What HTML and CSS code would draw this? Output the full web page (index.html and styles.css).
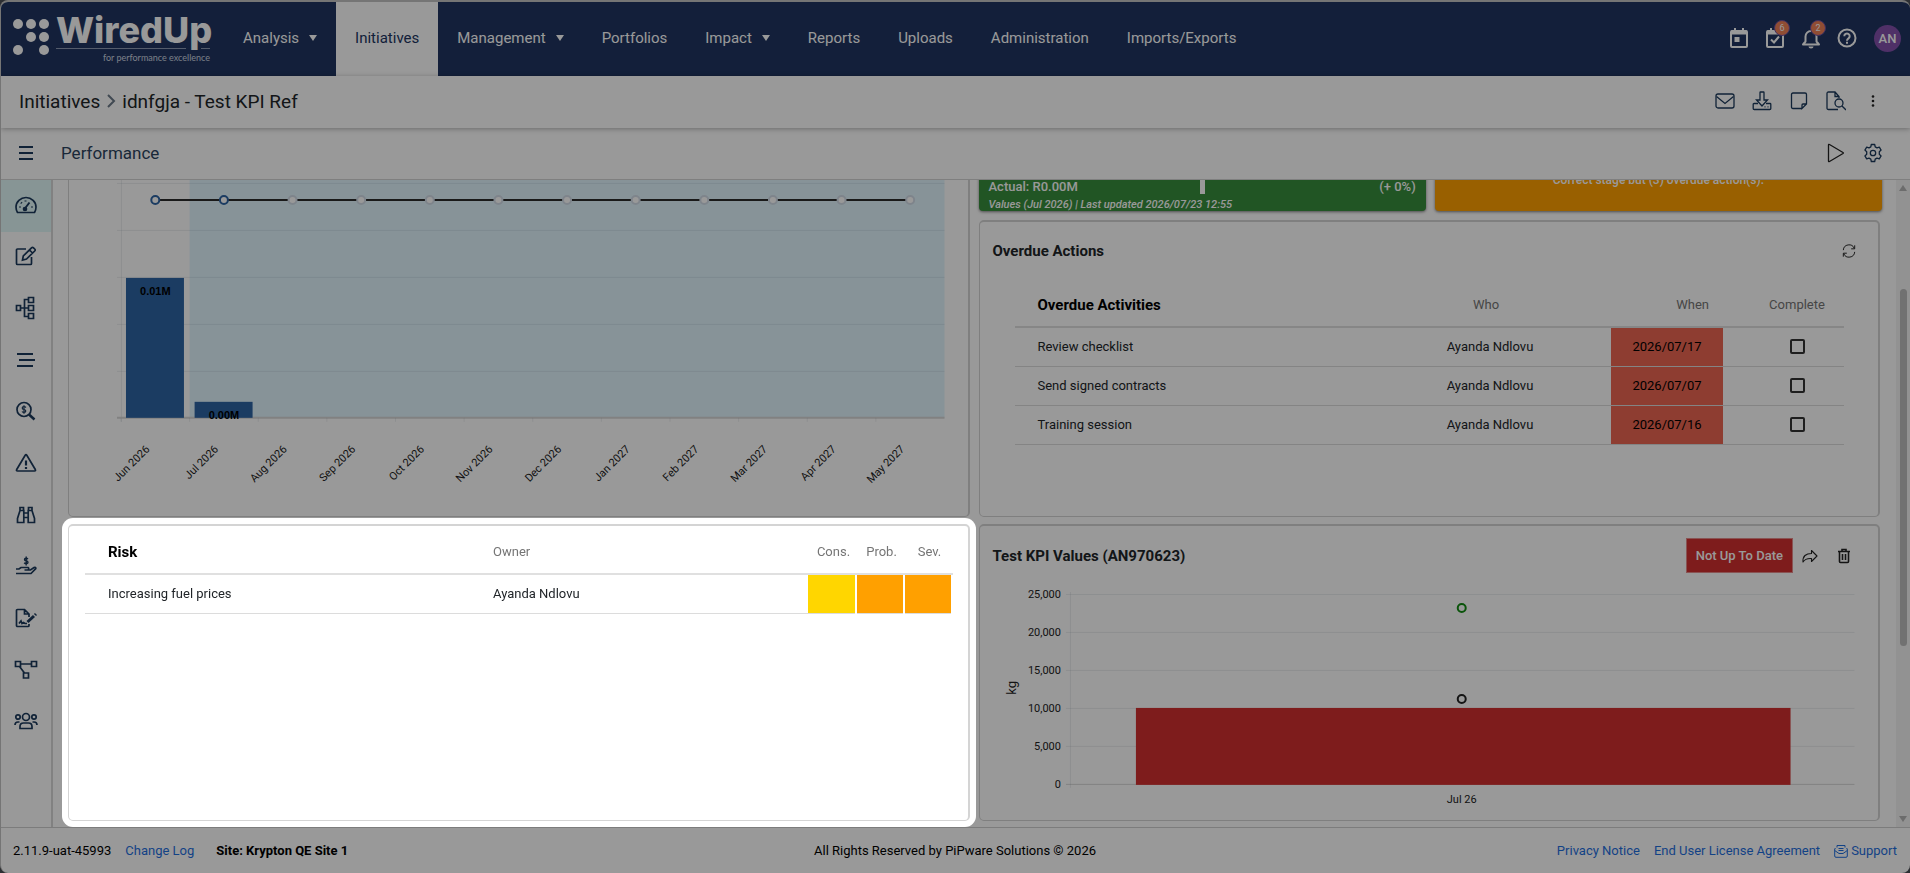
FILE: index.html
```
<!DOCTYPE html>
<html lang="en">
<head>
    <meta charset="UTF-8">
    <meta name="viewport" content="width=device-width, initial-scale=1.0">
    <title>WiredUp - Performance</title>
    <link rel="stylesheet" href="styles.css">
</head>
<body>

<div class="app">
    <header class="topbar">
        <a href="#" class="logo" aria-label="WiredUp">
            <svg width="212" height="74" viewBox="0 0 212 74">
                <g fill="#fff">
                    <circle cx="17" cy="22" r="5"/><circle cx="30" cy="22" r="5"/><circle cx="43" cy="22" r="5"/>
                    <circle cx="30" cy="35" r="5"/><circle cx="43" cy="35" r="5"/>
                    <circle cx="17" cy="48" r="5"/><circle cx="43" cy="48" r="5"/>
                </g>
                <path d="M55 46.500h130M200 46.500h9" stroke="#8c9ab5"/>
                <text x="55" y="41" class="logo-name">WiredUp</text>
                <text x="209" y="59" class="logo-tag">for performance excellence</text>
            </svg>
        </a>
        <nav class="menu">
            <a href="#">Analysis <span class="caret"></span></a>
            <a href="#" class="active">Initiatives</a>
            <a href="#">Management <span class="caret"></span></a>
            <a href="#">Portfolios</a>
            <a href="#">Impact <span class="caret"></span></a>
            <a href="#">Reports</a>
            <a href="#">Uploads</a>
            <a href="#">Administration</a>
            <a href="#">Imports/Exports</a>
        </nav>
        <div class="tools">
            <button aria-label="Calendar">
                <svg width="20" height="22" viewBox="0 0 20 22" fill="none" stroke="#fff" stroke-width="2"><rect x="2" y="4" width="16" height="16" rx="1"/><path d="M2 5.500h16" stroke-width="4"/><path d="M6 1v4M14 1v4"/><path d="M5.500 10h5v5h-5z" fill="#fff" stroke="none"/></svg>
            </button>
            <button aria-label="Tasks">
                <svg width="20" height="22" viewBox="0 0 20 22" fill="none" stroke="#fff" stroke-width="2"><rect x="2" y="4" width="16" height="16" rx="1"/><path d="M2 5.500h16" stroke-width="4"/><path d="M6 1v4M14 1v4M6 12.500l3 3 5-6"/></svg>
                <span class="badge">6</span>
            </button>
            <button aria-label="Notifications">
                <svg width="20" height="22" viewBox="0 0 20 22" fill="none" stroke="#fff" stroke-width="2"><path d="M2 17.500h16l-2.500-3V9.500a5.500 5.500 0 0 0-11 0v5L2 17.500z" stroke-linejoin="round"/><path d="M7.500 19.500h5a2.500 2 0 0 1-5 0z" fill="#fff" stroke="none"/></svg>
                <span class="badge">2</span>
            </button>
            <button aria-label="Help">
                <svg width="20" height="22" viewBox="0 0 20 22" fill="none" stroke="#fff" stroke-width="2"><circle cx="10" cy="11" r="8.500"/><path d="M7.300 9.200a2.700 2.700 0 1 1 4.200 2.200c-1 .7-1.500 1.100-1.500 2.300M10 14.800v2"/></svg>
            </button>
            <button class="avatar">AN</button>
        </div>
    </header>

    <div class="crumbs">
        <h1><a href="#">Initiatives</a>
            <svg width="10" height="16" viewBox="0 0 10 16" fill="none" stroke="#6c7a89" stroke-width="2"><path d="M2 2l6 6-6 6"/></svg>
            <span>idnfgja - Test KPI Ref</span></h1>
        <div class="actions">
            <button aria-label="Mail">
                <svg width="20" height="20" viewBox="0 0 20 20"><rect x="1" y="3" width="18" height="14" rx="2"/><path d="M1.500 5.500L10 12.500l8.500-7"/></svg>
            </button>
            <button aria-label="Download">
                <svg width="20" height="20" viewBox="0 0 20 20"><path d="M8 1.500q0-.5.500-.5h3q.5 0 .5.500V9h3.500L10 15 4.500 9H8z"/><path d="M6 12.500H2q-.8 0-.8.800v4.200q0 1 1 1h15.600q1 0 1-1v-4.200q0-.8-.8-.8h-4M12.500 15.800h1M15.500 15.800h1"/></svg>
            </button>
            <button aria-label="Notes">
                <svg width="20" height="20" viewBox="0 0 20 20"><path d="M13 17.500H4q-1.500 0-1.500-1.500V3.500Q2.500 2 4 2h12q1.500 0 1.500 1.500V13L13 17.500V14q0-1 1-1h3.500"/></svg>
            </button>
            <button aria-label="Preview">
                <svg width="20" height="20" viewBox="0 0 20 20"><path d="M12 18.500H2.500q-1.500 0-1.500-1.500V2.500Q1 1 2.500 1H9l4 4.500V7M9 1v4.500h4"/><circle cx="13" cy="12" r="4"/><path d="M16 15l4 4"/></svg>
            </button>
            <button aria-label="More">
                <svg width="20" height="20" viewBox="0 0 20 20"><g fill="#222" stroke="none"><circle cx="10" cy="5.500" r="1.300"/><circle cx="10" cy="10" r="1.300"/><circle cx="10" cy="14.500" r="1.300"/></g></svg>
            </button>
        </div>
    </div>

    <div class="pagebar">
        <button class="toggle" aria-label="Menu">
            <svg width="14" height="14" viewBox="0 0 14 14"><path d="M0 1h14M0 7h14M0 13h14" stroke-width="2"/></svg>
        </button>
        <h2>Performance</h2>
        <div class="actions">
            <button aria-label="Present">
                <svg width="20" height="20" viewBox="0 0 20 20"><path d="M2.500 2v16q0 1 1 .5l13.500-8q.7-.5 0-1l-13.500-8q-1-.5-1 .5z" stroke="#222"/></svg>
            </button>
            <button aria-label="Settings">
                <svg width="20" height="20" viewBox="0 0 20 20"><circle cx="10" cy="10" r="2.700"/><path d="M8.300 1.500h3.400l.5 2.400 1.800 1 2.300-.8 1.800 3-1.800 1.600v2.600l1.800 1.600-1.800 3-2.300-.8-1.800 1-.5 2.400H8.300l-.5-2.400-1.800-1-2.300.8-1.800-3 1.800-1.600V8.700L1.900 7.100l1.800-3 2.300.8 1.800-1z" stroke-linejoin="round"/></svg>
            </button>
        </div>
    </div>

    <div class="body">
        <aside class="sidebar">
            <nav>
                <a href="#" class="active" aria-label="Performance"><svg width="22" height="20" viewBox="0 0 22 20"><path d="M2.500 17.500Q1 15 1 12a10 9.500 0 0 1 20 0q0 3-1.500 5.500z"/><path d="M9.500 14l5-6.500M4.500 12h1M16.500 12h1M6 7.500l.8.800M10.500 5.500v1" stroke-width="2"/><circle cx="10" cy="14" r="1.500" fill="#1c3a5c"/></svg></a>
                <a href="#" aria-label="Edit"><svg width="22" height="20" viewBox="0 0 22 20"><path d="M11 3H2.500Q1.500 3 1.500 4v13.500q0 1 1 1h13q1 0 1-1V11"/><path d="M7.500 14l.8-4L16.500 1.800q1-1 2 0l1.200 1.200q1 1 0 2L11.500 13zM14.500 4l3 3"/></svg></a>
                <a href="#" aria-label="Hierarchy"><svg width="22" height="24" viewBox="0 0 22 24"><path d="M1.500 9.500h4v5h-4zM13.500 1.500h5v5h-5zM13.500 9.500h5v5h-5zM13.500 17.500h5v5h-5zM5.500 12h8M13.500 3.500h-4v17h4"/></svg></a>
                <a href="#" aria-label="Timeline"><svg width="22" height="20" viewBox="0 0 22 20"><path d="M2 4h16M4 10h16M2 16h16" stroke-width="2.200"/></svg></a>
                <a href="#" aria-label="Financials"><svg width="22" height="20" viewBox="0 0 22 20"><circle cx="9" cy="8.500" r="7"/><path d="M14 13.500l5.500 5" stroke-width="2.500"/><path d="M11 6.500q-1-1-2-1-1.800 0-1.800 1.400T9 8.500t1.800 1.500T9 11.500q-1.200 0-2-1M9 4.300v8.400" stroke-width="1.200"/></svg></a>
                <a href="#" aria-label="Risks"><svg width="22" height="20" viewBox="0 0 22 20"><path d="M10.200 2.200q.8-1.300 1.600 0l8.500 14.300q.7 1.500-.8 1.500h-17q-1.500 0-.8-1.500z"/><path d="M11 7.500v5M11 14v2" stroke-width="2.200"/></svg></a>
                <a href="#" aria-label="Benefits"><svg width="22" height="20" viewBox="0 0 22 20"><path d="M2.500 17.500v-4L5 5.500h3.800v12zM19.500 17.500v-4L17 5.500h-3.800v12zM8.800 8h4.400M8.800 12.500h4.400M5 5V2.500h3.500V5M13.500 5V2.500H17V5"/></svg></a>
                <a href="#" aria-label="Funding"><svg width="22" height="20" viewBox="0 0 22 20"><path d="M1 13h3l2-1.500h7q1.500.8 0 2.500H9.500M13 14h2.500l3.500-2.500q2-.5 1.800 1L16 17.500H1"/><path d="M13 3q-.8-.8-1.800-.8-1.700 0-1.700 1.300t1.700 1.400T13 6.200t-1.800 1.500q-1.200 0-2-1M11.200.5v9" stroke-width="1.400"/></svg></a>
                <a href="#" aria-label="Contracts"><svg width="22" height="20" viewBox="0 0 22 20"><path d="M14 16v1.500q0 1-1 1H2.500q-1 0-1-1v-15q0-1 1-1H9.500L14 6v3M9.500 1.500V6H14M4 15.500l2-2.500 1 2.500 1.500-1 1.500 1h2"/><path d="M12.500 14l6.500-6M20 7l1-1" stroke-width="3"/></svg></a>
                <a href="#" aria-label="Workflow"><svg width="24" height="20" viewBox="0 0 24 20"><path d="M1.500 1.500h5v5h-5zM17.500 1.500h5v5h-5zM9.500 13h5v5h-5zM6.500 4h11M5.500 6.500l5 6.500"/></svg></a>
                <a href="#" aria-label="Team"><svg width="24" height="20" viewBox="0 0 24 20"><circle cx="12" cy="6" r="3.500"/><circle cx="4" cy="6" r="2.200"/><circle cx="20" cy="6" r="2.200"/><path d="M6 17.500v-2q0-3.500 3.500-3.500h5q3.500 0 3.500 3.500v2zM1 14q0-3 3-3h1.500M23 14q0-3-3-3h-1.500"/></svg></a>
            </nav>
        </aside>

        <main class="dashboard">
            <div class="column">
                <section class="card">
                    <svg class="chart" id="savings" viewBox="0 0 899 400"></svg>
                </section>
                <section class="card risk spotlight">
                    <table class="grid">
                        <colgroup><col class="c-risk"><col><col class="c-score"><col class="c-score"><col class="c-score"></colgroup>
                        <thead>
                            <tr><th class="title">Risk</th><th class="owner">Owner</th><th>Cons.</th><th>Prob.</th><th>Sev.</th></tr>
                        </thead>
                        <tbody>
                            <tr><td>Increasing fuel prices</td><td class="owner">Ayanda Ndlovu</td><td class="score medium"></td><td class="score high"></td><td class="score high"></td></tr>
                        </tbody>
                    </table>
                </section>
            </div>

            <div class="column">
                <div class="tiles">
                    <div class="tile good">
                        <div class="tile-row"><span>Actual: R0.00M</span><span class="marker"></span><span class="change">(+ 0%)</span></div>
                        <em>Values (Jul 2026) | Last updated 2026/07/23 12:55</em>
                    </div>
                    <div class="tile warn">Correct stage but (3) overdue action(s).</div>
                </div>
                <section class="card overdue">
                    <div class="card-head">
                        <h3>Overdue Actions</h3>
                        <button aria-label="Refresh">
                            <svg width="14" height="14" viewBox="0 0 16 16"><path d="M1.500 7A6.500 6.500 0 0 1 14 5M14.500 9A6.500 6.500 0 0 1 2 11M14.500 1.500V5.500h-4M1.500 14.500v-4h4"/></svg>
                        </button>
                    </div>
                    <table class="grid">
                        <colgroup><col><col class="c-who"><col class="c-when"><col class="c-done"></colgroup>
                        <thead>
                            <tr><th class="title">Overdue Activities</th><th class="who-head">Who</th><th class="when">When</th><th class="done">Complete</th></tr>
                        </thead>
                        <tbody>
                            <tr><td>Review checklist</td><td class="who">Ayanda Ndlovu</td><td class="late">2026/07/17</td><td class="done"><input type="checkbox" aria-label="Complete Review checklist"></td></tr>
                            <tr><td>Send signed contracts</td><td class="who">Ayanda Ndlovu</td><td class="late">2026/07/07</td><td class="done"><input type="checkbox" aria-label="Complete Send signed contracts"></td></tr>
                            <tr><td>Training session</td><td class="who">Ayanda Ndlovu</td><td class="late">2026/07/16</td><td class="done"><input type="checkbox" aria-label="Complete Training session"></td></tr>
                        </tbody>
                    </table>
                </section>
                <section class="card">
                    <div class="card-head">
                        <h3>Test KPI Values (AN970623)</h3>
                        <button class="status">Not Up To Date</button>
                        <button aria-label="Share">
                            <svg width="16" height="16" viewBox="0 0 16 16"><path d="M9.500 2.500v3C4 5.500.500 8 1 14q2.500-4 8.500-3.500v3L15 8z" stroke-linejoin="round"/></svg>
                        </button>
                        <button aria-label="Delete">
                            <svg width="16" height="16" viewBox="0 0 16 16"><path d="M3.500 4v9.500q0 1 1 1h7q1 0 1-1V4M2 3.500h12M6 3V1.500h4V3M6.500 6v6M9.500 6v6" stroke-width="1.600"/></svg>
                        </button>
                    </div>
                    <svg class="chart" id="kpi" viewBox="0 0 899 235"></svg>
                </section>
            </div>
        </main>

        <div class="scrollbar">
            <i class="up"></i>
            <i class="thumb"></i>
            <i class="down"></i>
        </div>
    </div>

    <footer class="footer">
        <div class="left">
            <span>2.11.9-uat-45993</span>
            <a href="#">Change Log</a>
            <b>Site: Krypton QE Site 1</b>
        </div>
        <div>All Rights Reserved by PiPware Solutions © 2026</div>
        <div class="right">
            <a href="#">Privacy Notice</a>
            <a href="#">End User License Agreement</a>
            <a href="#" class="support"><svg width="14" height="14" viewBox="0 0 14 14" fill="none" stroke="#1f6fe0"><path d="M3 3.500V1.500h8v2M1.500 4L.7 5v7q0 1.300 1.300 1.300h10q1.300 0 1.300-1.300V5l-.8-1M.7 6.500L5 9.500h4l4.300-3"/><path d="M4.500 4.500h5M4.500 6.500h5"/></svg>Support</a>
        </div>
    </footer>
</div>
<div class="overlay"></div>

<script>
    const months = ['Jun 2026', 'Jul 2026', 'Aug 2026', 'Sep 2026', 'Oct 2026', 'Nov 2026',
        'Dec 2026', 'Jan 2027', 'Feb 2027', 'Mar 2027', 'Apr 2027', 'May 2027'];

    function drawSavings() {
        const left = 52, right = 876, base = 302, step = (right - left) / months.length;
        const bars = [{ height: 140, label: '0.01M' }, { height: 16, label: '0.00M' }];
        let out = `<rect x="${left + step}" y="20" width="${right - left - step}" height="${base - 20}" fill="#e1f5fe"/>`;
        for (let y = base - 47; y > 20; y -= 47) {
            out += `<path class="gridline" d="M${left - 4} ${y + 0.5}H${right}"/>`;
        }
        out += `<path class="gridline" d="M${left + 0.5} 20V${base + 4}"/>`;
        out += `<path class="axis" d="M${left - 4} ${base}H${right}"/>`;
        bars.forEach((bar, i) => {
            out += `<rect class="bar" x="${left + step * i + 5}" y="${base - bar.height}" width="58" height="${bar.height}"/>`;
            out += `<text class="value" x="${left + step * (i + 0.5)}" y="${base - bar.height + 17}">${bar.label}</text>`;
        });
        out += `<path class="target" d="M${left + step / 2} 84H${right - step / 2}"/>`;
        months.forEach((month, i) => {
            const x = left + step * (i + 0.5);
            out += `<circle class="${i < 2 ? 'dot' : 'dot future'}" cx="${x}" cy="84" r="4"/>`;
            out += `<path class="gridline" d="M${left + step * i} ${base}v4"/>`;
            out += `<text class="label" text-anchor="end" transform="translate(${x - 5} 334) rotate(-45)">${month}</text>`;
        });
        document.getElementById('savings').innerHTML = out;
    }

    function drawKpi() {
        const left = 90, right = 875, base = 200, step = 38;
        let out = '';
        for (let i = 0; i <= 5; i++) {
            const y = base - i * step;
            out += `<path class="${i ? 'gridline' : 'axis thin'}" d="M${left - 4} ${y - 0.5}H${right}"/>`;
            out += `<text class="label" text-anchor="end" x="81" y="${y + 3}">${(i * 5000).toLocaleString('en-US')}</text>`;
        }
        out += `<path class="gridline" d="M${left + 0.5} 7V${base + 3}"/>`;
        out += `<rect class="bar red" x="156" y="${base - step * 2 - 1}" width="655" height="${step * 2 + 1}"/>`;
        out += '<circle class="dot green" cx="482" cy="23" r="4"/><circle class="dot black" cx="482" cy="114" r="4"/>';
        out += '<text class="label" text-anchor="middle" x="482" y="218">Jul 26</text>';
        out += '<text class="unit" text-anchor="middle" transform="translate(36 103) rotate(-90)">kg</text>';
        document.getElementById('kpi').innerHTML = out;
    }

    drawSavings();
    drawKpi();
</script>

</body>
</html>
```
FILE: styles.css
```
* {
    box-sizing: border-box;
}
body {
    margin: 0;
    background-color: #4c4f55;
    font-family: Roboto, "Liberation Sans", sans-serif;
    font-size: 13px;
    color: #212529;
}
a {
    color: #1f6fe0;
    text-decoration: none;
}
button {
    padding: 0;
    border: none;
    background: none;
    font-family: inherit;
    cursor: pointer;
}
h1, h2, h3 {
    margin: 0;
    font-weight: 400;
}
svg {
    display: block;
}
.app {
    display: flex;
    flex-direction: column;
    height: 100vh;
    border-top: 2px solid #c4c4c4;
    border-left: 1px solid #c4c4c4;
    border-radius: 8px;
    background-color: white;
    overflow: hidden;
}

/* top navigation */
.topbar {
    display: flex;
    flex-shrink: 0;
    height: 74px;
    padding-right: 9px;
    background-color: #203561;
}
.logo-name {
    font-family: Inter, sans-serif;
    font-size: 36px;
    font-weight: 800;
    fill: white;
}
.logo-tag {
    font-family: Lato, sans-serif;
    font-size: 9px;
    fill: #cdd4e0;
    text-anchor: end;
}
.menu {
    display: flex;
    margin-left: 11px;
}
.menu a {
    display: flex;
    align-items: center;
    gap: 10px;
    padding: 0 19px 2px;
    color: white;
    font-size: 15px;
}
.menu .active {
    background-color: white;
    color: #203561;
}
.caret {
    border: 4px solid transparent;
    border-top: 6px solid white;
    border-bottom: none;
}
.tools {
    display: flex;
    align-items: center;
    margin-left: auto;
    padding-bottom: 2px;
}
.tools button {
    position: relative;
    display: flex;
    justify-content: center;
    width: 36px;
}
.badge {
    position: absolute;
    top: -7px;
    right: 3px;
    width: 16px;
    height: 16px;
    border: 1px solid #6a4fa0;
    border-radius: 50%;
    background-color: #f08058;
    color: white;
    font-size: 9px;
    line-height: 14px;
}
.tools .avatar {
    align-items: center;
    width: 27px;
    height: 27px;
    margin-left: 9px;
    border-radius: 50%;
    background-color: #8450ac;
    color: white;
    font-size: 13px;
    font-weight: 500;
}

/* breadcrumb and page bars */
.crumbs, .pagebar {
    display: flex;
    align-items: center;
    flex-shrink: 0;
    height: 52px;
    padding: 0 19px 2px 0;
}
.crumbs {
    position: relative;
    padding-left: 18px;
    box-shadow: 0 1px 5px rgba(0, 0, 0, 0.3);
}
.crumbs h1 {
    display: flex;
    align-items: center;
    gap: 6px;
    font-size: 19px;
}
.crumbs a {
    color: #212529;
}
.pagebar {
    border-bottom: 1px solid #d4d4d4;
}
.pagebar h2 {
    color: #2c4460;
    font-size: 17px;
}
.toggle {
    display: flex;
    justify-content: center;
    width: 50px;
    margin-right: 10px;
}
.actions {
    display: flex;
    margin-left: auto;
}
.actions button {
    display: flex;
    justify-content: center;
    width: 37px;
}
.actions svg, .toggle svg, .sidebar svg, .card-head svg {
    fill: none;
    stroke: #1c3a5c;
    stroke-width: 1.3;
}

/* sidebar */
.body {
    display: flex;
    flex: 1;
    min-height: 0;
}
.sidebar {
    flex-shrink: 0;
    width: 52px;
    border-right: 2px solid #d8d8d8;
}
.sidebar nav {
    display: grid;
    grid-auto-rows: 1fr;
    height: 100%;
    max-height: 568px;
}
.sidebar a {
    display: flex;
    align-items: center;
    justify-content: center;
    padding-bottom: 2px;
}
.sidebar svg {
    stroke-width: 1.7;
}
.sidebar .active {
    background-color: #e2f8f8;
}

/* dashboard */
.dashboard {
    display: grid;
    grid-template-columns: 1fr 1fr;
    gap: 9px;
    flex: 1;
    min-width: 0;
    padding: 0 16px 6px 15px;
    overflow: hidden;
}
.column {
    display: flex;
    flex-direction: column;
    justify-content: flex-end;
    gap: 7px;
    min-width: 0;
    min-height: 0;
}
.card {
    flex-shrink: 0;
    min-height: 297px;
    border: 1px solid #d4d4d4;
    border-width: 2px 2px 1px 1px;
    border-radius: 5px;
    background-color: white;
}
.card-head {
    display: flex;
    align-items: center;
    height: 59px;
    padding: 0 17px 0 13px;
}
.card-head h3 {
    margin-right: auto;
    font-size: 15px;
    font-weight: 700;
}
.card-head button {
    display: flex;
    justify-content: center;
    width: 34px;
}
.card-head svg {
    stroke: #222;
    stroke-width: 1.1;
}
.card-head .status {
    align-items: center;
    width: auto;
    height: 35px;
    padding: 0 9px;
    border: 1px solid #e58b8b;
    background-color: #d32f2f;
    color: white;
    font-size: 13px;
    font-weight: 500;
}
.overdue .card-head {
    height: 57px;
    padding-right: 12px;
}
.tiles {
    display: grid;
    grid-template-columns: 1fr 1fr;
    flex-shrink: 0;
    gap: 9px;
    margin: 0 -2px 2px 0;
}
.tile {
    height: 84px;
    border-radius: 4px;
    box-shadow: 0 1px 3px rgba(0, 0, 0, 0.5);
    color: white;
    font-size: 13px;
    font-weight: 500;
}
.good {
    display: flex;
    flex-direction: column;
    justify-content: flex-end;
    padding: 0 10px;
    background-color: #388e3c;
}
.tile-row {
    display: grid;
    grid-template-columns: 1fr auto 1fr;
    line-height: 22px;
}
.change {
    text-align: right;
}
.marker {
    width: 5px;
    height: 18px;
    background-color: white;
}
.tile em {
    font-size: 11px;
    line-height: 13px;
}
.warn {
    padding-top: 45px;
    background-color: #ffa000;
    font-size: 12px;
    line-height: 16px;
    text-align: center;
}

/* tables */
.grid {
    width: calc(100% - 31px);
    margin: 0 15px 0 16px;
    border-collapse: collapse;
    table-layout: fixed;
}
.overdue .grid {
    width: calc(100% - 69px);
    margin: 0 34px 0 35px;
}
.c-risk {
    width: 386px;
}
.c-score {
    width: 48px;
}
.c-who {
    width: 242px;
}
.c-when {
    width: 112px;
}
.c-done {
    width: 121px;
}
.grid th {
    height: 48px;
    padding: 4px 0 0 4px;
    border-bottom: 2px solid #e0e0e0;
    color: #757575;
    font-weight: 400;
    text-align: center;
}
.grid .title {
    padding-left: 23px;
    color: black;
    font-size: 15px;
    font-weight: 700;
    text-align: left;
}
.grid td {
    height: 39px;
    padding: 0 0 0 23px;
    border-bottom: 1px solid #dcdcdc;
}
.grid .owner {
    padding-left: 22px;
    text-align: left;
}
.grid .who {
    padding: 0;
    text-align: center;
}
.grid .who-head {
    padding-right: 8px;
    padding-left: 0;
}
.grid .when {
    padding-right: 14px;
    text-align: right;
}
.grid .late {
    padding: 0;
    background-color: #ed6652;
    color: black;
    text-align: center;
}
.grid .done {
    padding-left: 27px;
    text-align: center;
}
.done input {
    appearance: none;
    display: block;
    width: 15px;
    height: 15px;
    margin: 0 auto;
    border: 2px solid #333;
    border-radius: 2px;
}
.grid .score {
    padding: 0;
    border-right: 2px solid white;
}
.medium {
    background-color: #ffd600;
}
.high {
    background-color: #ffa000;
}

/* charts */
.chart {
    width: 100%;
}
.gridline {
    stroke: #7d8a99;
    stroke-opacity: 0.15;
}
.axis {
    stroke: #d8d8d8;
    stroke-width: 2;
}
.thin {
    stroke-width: 1;
}
.bar {
    fill: #2d64a3;
}
.red {
    fill: #d32f2f;
}
.target {
    stroke: #2b2b2b;
    stroke-width: 2;
}
.dot {
    fill: white;
    stroke: #2d64a3;
    stroke-width: 2;
}
.future {
    stroke: #d3dde8;
}
.green {
    stroke: #128c12;
}
.black {
    stroke: #222;
}
.label {
    font-size: 11px;
    fill: #222;
}
.unit {
    font-size: 13px;
    fill: #222;
}
.value {
    font-family: "Liberation Sans", sans-serif;
    font-size: 11px;
    font-weight: 700;
    text-anchor: middle;
    fill: black;
}

/* scrollbar */
.scrollbar {
    display: flex;
    flex-direction: column;
    align-items: center;
    flex-shrink: 0;
    width: 14px;
    padding: 5px 0;
    background-color: #f3f3f3;
}
.up, .down {
    border: 4px solid transparent;
    border-bottom: 6px solid #b5b5b5;
    border-top: none;
}
.down {
    margin-top: auto;
    border-top: 6px solid #b5b5b5;
    border-bottom: none;
}
.thumb {
    width: 7px;
    height: 56%;
    margin-top: 98px;
    border-radius: 4px;
    background-color: #bcbcbc;
}

/* footer */
.footer {
    display: grid;
    grid-template-columns: 1fr auto 1fr;
    align-items: center;
    flex-shrink: 0;
    height: 46px;
    padding: 0 13px 0 12px;
    border-top: 1px solid #cfcfcf;
    color: black;
}
.left, .right {
    display: flex;
    gap: 14px;
}
.left b {
    margin-left: 8px;
}
.right {
    justify-content: flex-end;
}
.support {
    display: flex;
    align-items: center;
    gap: 3px;
}

/* spotlight: everything is dimmed except the highlighted card */
.overlay {
    position: fixed;
    inset: 0;
    z-index: 1;
    background-color: rgba(0, 0, 0, 0.4);
    pointer-events: none;
}
.spotlight {
    position: relative;
    z-index: 2;
    box-shadow: 0 0 0 6px white;
}
```
